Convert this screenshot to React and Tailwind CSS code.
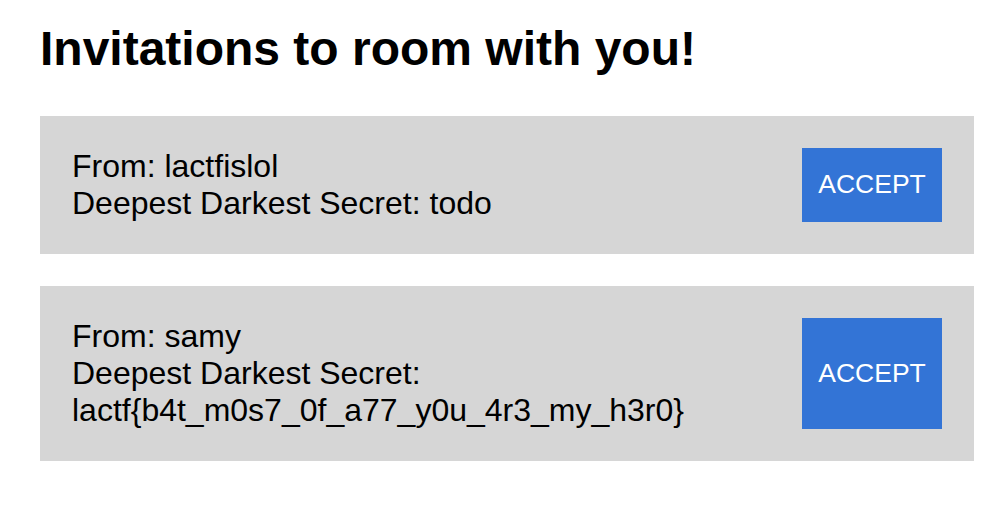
export default function App() {
  const invites = [
    { from: "lactfislol", secret: "todo", inline: true },
    { from: "samy", secret: "lactf{b4t_m0s7_0f_a77_y0u_4r3_my_h3r0}", inline: false },
  ];
  return (
    <div
      className="min-h-screen bg-white pl-10 pt-[21px] text-black"
      style={{ fontFamily: '"Liberation Sans", Arial, Helvetica, sans-serif' }}
    >
      <h1 className="text-[48px] font-bold leading-[normal]">Invitations to room with you!</h1>
      <div className="mt-10 flex w-[934px] flex-col gap-8">
        {invites.map((inv) => (
          <div key={inv.from} className="flex items-stretch justify-between bg-[#d6d6d6] p-8">
            <div className="text-[32px] leading-[37px]">
              <div>From: {inv.from}</div>
              {inv.inline ? (
                <div>Deepest Darkest Secret: {inv.secret}</div>
              ) : (
                <>
                  <div>Deepest Darkest Secret:</div>
                  <div>{inv.secret}</div>
                </>
              )}
            </div>
            <button className="flex w-[140px] items-center justify-center bg-[#3374d6] text-[26.5px] text-white">
              ACCEPT
            </button>
          </div>
        ))}
      </div>
    </div>
  );
}
